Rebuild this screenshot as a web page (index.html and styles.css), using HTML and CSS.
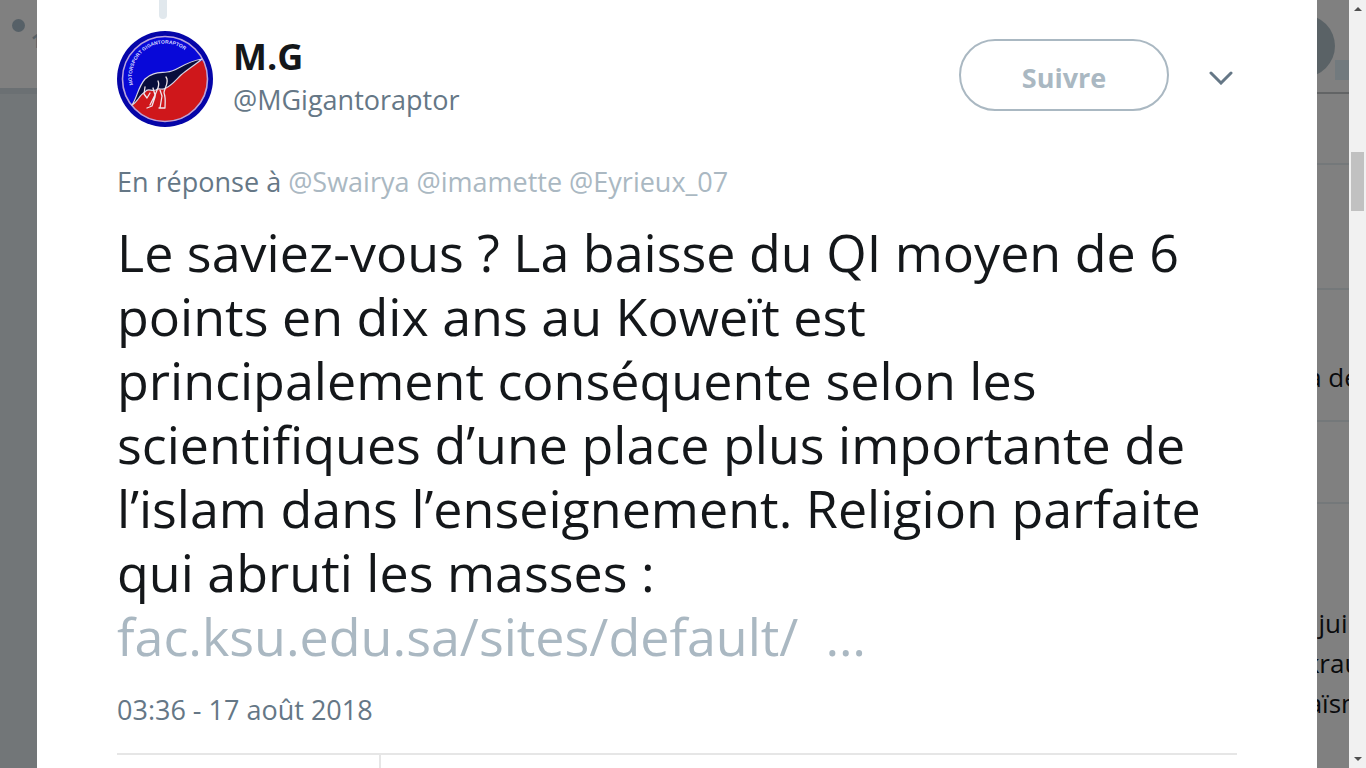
FILE: index.html
```
<!DOCTYPE html>
<html lang="fr">
<head>
    <meta charset="UTF-8">
    <meta name="viewport" content="width=device-width, initial-scale=1.0">
    <title>M.G sur Twitter</title>
    <link rel="stylesheet" href="styles.css">
</head>
<body>
    <div class="page">
        <aside class="backdrop backdrop-left">
            <div class="topbar">
                <span class="dot"></span>
                <span class="count">1</span>
            </div>
        </aside>

        <main class="permalink">
            <div class="thread-line"></div>
            <article class="tweet">
                <header class="tweet-header">
                    <svg class="avatar" viewBox="0 0 96 96" role="img" aria-label="M.G">
                        <defs>
                            <clipPath id="disc"><circle cx="48" cy="48" r="43"/></clipPath>
                            <path id="arc" d="M16 54A33 33 0 0 1 78 32"/>
                        </defs>
                        <circle cx="48" cy="48" r="48" fill="#0505a8"/>
                        <g clip-path="url(#disc)">
                            <rect width="96" height="96" fill="#0808d8"/>
                            <path d="M13 76L26 56L46 54L65 40L90 27V96H13Z" fill="#cf171b"/>
                        </g>
                        <circle cx="48" cy="48" r="42.500" fill="none" stroke="#b9a4dc" stroke-width="1.600"/>
                        <path d="M15 74C20 67 21 56 28 48C35 41 43 42 50 41C60 41 66 31 85 28C78 34 71 38 64 44C58 50 54 55 49 57C45 60 42 56 39 59C34 61 31 56 28 61C22 64 21 71 15 74Z" fill="#080d3c" stroke="#d6d3e5" stroke-width="1.200" stroke-linejoin="round"/>
                        <path d="M41 50C44 56 38 60 38 66L35 75L30 77M49 46C53 51 47 57 47 62C49 67 48 72 48 77H42M43 59L45 65L43 77M36 57L38 64L33 74M28 56L27 63L30 67L33 62" fill="none" stroke="#eee5ec" stroke-width="1.300" stroke-linecap="round" stroke-linejoin="round"/>
                        <text class="avatar-text"><textPath href="#arc">MOTORSPORT GIGANTORAPTOR</textPath></text>
                    </svg>
                    <div class="author">
                        <strong class="name">M.G</strong>
                        <a class="handle" href="#">@MGigantoraptor</a>
                    </div>
                    <button class="follow" type="button">Suivre</button>
                    <button class="more" type="button" aria-label="Plus">
                        <svg viewBox="0 0 24 14" width="24" height="14"><path d="M2 2l10 10L22 2" fill="none" stroke="#657786" stroke-width="3" stroke-linecap="round"/></svg>
                    </button>
                </header>

                <p class="reply">En réponse à <a href="#">@Swairya</a> <a href="#">@imamette</a> <a href="#">@Eyrieux_07</a></p>

                <p class="tweet-text">
                    Le saviez-vous ? La baisse du QI moyen de 6<br>
                    points en dix ans au Koweït est<br>
                    principalement conséquente selon les<br>
                    scientifiques d’une place plus importante de<br>
                    l’islam dans l’enseignement. Religion parfaite<br>
                    qui abruti les masses :<br>
                    <a href="#">fac.ksu.edu.sa/sites/default/ &nbsp;…</a>
                </p>

                <p class="date">03:36 - 17 août 2018</p>

                <footer class="stats">
                    <div class="stat"></div>
                </footer>
            </article>
        </main>

        <aside class="backdrop backdrop-right">
            <div class="panel panel-top">
                <span class="round"></span>
                <span class="square"></span>
            </div>
            <div class="panel panel-small"></div>
            <div class="panel panel-medium"></div>
            <div class="panel panel-text"><p>a de</p></div>
            <div class="panel panel-footer"></div>
            <div class="panel panel-last">
                <p>jui</p>
                <p>krau</p>
                <p>&nbsp;aïsm</p>
            </div>
        </aside>

        <div class="scrollbar">
            <span class="arrow arrow-up"></span>
            <span class="thumb"></span>
            <span class="arrow arrow-down"></span>
        </div>
    </div>
</body>
</html>
```
FILE: styles.css
```
* {
    box-sizing: border-box;
}

body {
    margin: 0;
    font-family: "Open Sans", "Noto Sans", sans-serif;
    color: #14171a;
    background: #808080;
}

p {
    margin: 0;
}

a {
    color: #aab8c2;
    text-decoration: none;
}

button {
    font-family: inherit;
    background: none;
    cursor: pointer;
}

.page {
    display: flex;
    height: 100vh;
    overflow: hidden;
}

/* dimmed page behind the tweet */
.backdrop {
    overflow: hidden;
    flex-shrink: 0;
}

.backdrop-left {
    width: 37px;
    background: #727678;
}

.topbar {
    display: flex;
    gap: 6px;
    height: 94px;
    padding: 19px 0 0 12px;
    background: #808080;
    border-bottom: 6px solid #6b7073;
}

.dot {
    flex-shrink: 0;
    width: 13px;
    height: 13px;
    border-radius: 50%;
    background: #566067;
}

.count {
    padding-top: 8px;
    font-size: 20px;
    font-weight: bold;
    line-height: 28px;
    color: #566067;
}

.backdrop-right {
    width: 32px;
    background: #808080;
}

.panel {
    display: flex;
    flex-direction: column;
    align-items: center;
    justify-content: center;
    border-bottom: 2px solid #74787a;
    font-size: 26px;
    line-height: 40px;
    color: #0a0b0d;
    white-space: nowrap;
}

.panel-top {
    flex-direction: row;
    align-items: flex-start;
    justify-content: flex-end;
    height: 94px;
    padding-top: 15px;
    border-color: #626465;
}

.round {
    flex-shrink: 0;
    width: 62px;
    height: 62px;
    border-radius: 50%;
    background: #5a6266;
}

.square {
    flex-shrink: 0;
    width: 14px;
    height: 20px;
    margin-top: 45px;
    background: #727a7e;
}

.panel-small {
    height: 71px;
}

.panel-medium {
    height: 125px;
}

.panel-text {
    height: 132px;
    padding-top: 44px;
}

.panel-footer {
    height: 82px;
}

.panel-last {
    justify-content: flex-start;
    height: 264px;
    padding-top: 99px;
    border-bottom: none;
}

/* tweet */
.permalink {
    flex: 1;
    min-width: 0;
    padding: 0 80px;
    background: #fff;
}

.thread-line {
    width: 8px;
    height: 19px;
    margin-left: 42px;
    border-radius: 0 0 4px 4px;
    background: #e1e8ed;
}

.tweet-header {
    display: flex;
    align-items: flex-start;
    margin-top: 12px;
}

.avatar {
    flex-shrink: 0;
    width: 96px;
    height: 96px;
    margin-right: 20px;
}

.avatar-text {
    font-family: "Liberation Sans", sans-serif;
    font-size: 5px;
    font-weight: bold;
    fill: #d5d7ff;
}

.author {
    display: flex;
    flex: 1;
    flex-direction: column;
    padding-top: 4px;
}

.name {
    font-size: 36px;
    line-height: 44px;
}

.handle {
    font-size: 27px;
    line-height: 42px;
    color: #657786;
}

.follow {
    width: 210px;
    height: 72px;
    margin-top: 8px;
    padding: 4px 0 0;
    border: 2px solid #aab8c2;
    border-radius: 36px;
    font-size: 27px;
    font-weight: bold;
    color: #aab8c2;
}

.more {
    display: flex;
    margin: 40px 4px 0 40px;
    padding: 0;
    border: none;
}

.reply {
    margin-top: 35px;
    font-size: 27px;
    line-height: 40px;
    color: #657786;
}

.tweet-text {
    margin-top: 18px;
    font-size: 52px;
    line-height: 64px;
    white-space: nowrap;
}

.date {
    margin-top: 20px;
    font-size: 27px;
    line-height: 44px;
    color: #657786;
}

.stats {
    display: flex;
    margin-top: 21px;
    border-top: 2px solid #e6e6e6;
}

.stat {
    width: 264px;
    height: 80px;
    border-right: 2px solid #e6e6e6;
}

/* window scrollbar */
.scrollbar {
    display: flex;
    flex-direction: column;
    align-items: center;
    flex-shrink: 0;
    width: 17px;
    padding: 7px 0;
    background: #f1f1f1;
}

.arrow {
    border: 4px solid transparent;
}

.arrow-up {
    border-top: none;
    border-bottom-color: #505050;
}

.arrow-down {
    margin-top: auto;
    border-bottom: none;
    border-top-color: #505050;
}

.thumb {
    width: 13px;
    height: 59px;
    margin-top: 141px;
    background: #c1c1c1;
}
```
